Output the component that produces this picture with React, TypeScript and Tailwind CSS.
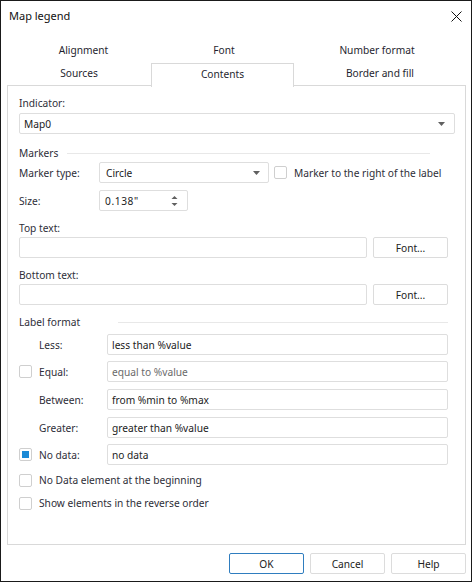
import React from "react";

const Arrow = () => (
  <svg width="7" height="4" viewBox="0 0 7 4" className="shrink-0">
    <path d="M0 0h7L3.5 4z" fill="#606060" />
  </svg>
);

const Check = ({ checked = false }: { checked?: boolean }) => (
  <div className="w-[13px] h-[13px] shrink-0 rounded-[2px] border border-[#cfcfcf] bg-white flex items-center justify-center">
    {checked && <div className="w-[7px] h-[7px] bg-[#1c8ad6]" />}
  </div>
);

const Input = ({ value, placeholder, className = "" }: { value?: string; placeholder?: string; className?: string }) => (
  <div className={"h-[21px] rounded-[2px] border border-[#dedede] bg-white flex items-center px-[4px] " + className}>
    {value ? <span className="text-[#222]">{value}</span> : placeholder ? <span className="text-[#6a6a6a]">{placeholder}</span> : null}
  </div>
);

const Btn = ({ label, primary = false, className = "" }: { label: string; primary?: boolean; className?: string }) => (
  <div
    className={
      "h-[21px] rounded-[2px] border flex items-center justify-center text-[#222] bg-white " +
      (primary ? "border-[#2f7dbf] " : "border-[#dcdcdc] ") +
      className
    }
  >
    {label}
  </div>
);

export default function App() {
  return (
    <div className="w-[476px] h-[582px] bg-white font-['Noto_Sans',sans-serif] text-[10.2px] leading-[16px] text-[#2e2e38] whitespace-nowrap">
      <div className="w-[472px] h-[582px] border border-[#1a1a1a] flex flex-col">
        {/* title bar */}
        <div className="h-[30px] flex items-center pl-[8px] pr-[9px]">
          <span className="text-[#111] text-[11px]">Map legend</span>
          <div className="ml-auto w-[12px] h-[12px] flex items-center justify-center">
            <svg width="11" height="11" viewBox="0 0 11 11">
              <path d="M0.5 0.5L10.5 10.5M10.5 0.5L0.5 10.5" stroke="#111" strokeWidth="1" />
            </svg>
          </div>
        </div>

        <div className="ml-[6px] w-[459px] mt-[6px]">
          {/* tabs row 1 */}
          <div className="flex h-[24px] text-[#1f1f2f] pt-[1px]">
            <div className="w-[153px] flex items-center justify-center">Alignment</div>
            <div className="w-[128px] flex items-center justify-center">Font</div>
            <div className="w-[178px] flex items-center justify-center">Number format</div>
          </div>
          {/* tabs row 2 */}
          <div className="flex h-[24px] text-[#1f1f2f] relative z-10">
            <div className="w-[144px] flex items-center justify-center">Sources</div>
            <div className="w-[143px] mt-[2px] h-[24px] shrink-0 border border-b-0 border-[#d9d9d9] bg-white flex items-center justify-center pb-[3px]">
              Contents
            </div>
            <div className="w-[172px] flex items-center justify-center">Border and fill</div>
          </div>

          {/* panel */}
          <div className="h-[460px] border border-[#d9d9d9] flex flex-col pl-[11px]">
            <div className="mt-[8px] h-[18px] flex items-center">Indicator:</div>
            <div className="mt-[1px] h-[21px] w-[436px] rounded-[2px] border border-[#dedede] flex items-center pl-[4px] pr-[9px]">
              <span className="text-[#222]">Map0</span>
              <span className="ml-auto">
                <Arrow />
              </span>
            </div>

            <div className="mt-[10px] h-[18px] flex items-center">
              <span>Markers</span>
              <div className="ml-[9px] w-[363px] h-px bg-[#e8e8e8]" />
            </div>

            <div className="mt-[0px] h-[21px] flex items-center">
              <span className="w-[80px]">Marker type:</span>
              <div className="w-[170px] h-[21px] rounded-[2px] border border-[#dedede] flex items-center pl-[6px] pr-[8px]">
                <span className="text-[#222]">Circle</span>
                <span className="ml-auto">
                  <Arrow />
                </span>
              </div>
              <div className="ml-[5px]">
                <Check />
              </div>
              <span className="ml-[7px]">Marker to the right of the label</span>
            </div>

            <div className="mt-[7px] h-[21px] flex items-center">
              <span className="w-[80px]">Size:</span>
              <div className="w-[89px] h-[21px] rounded-[2px] border border-[#dedede] flex items-center pl-[5px] pr-[9px]">
                <span className="text-[#222] tracking-[0.6px]">0.138"</span>
                <svg width="7" height="12" viewBox="0 0 7 12" className="ml-auto">
                  <path d="M0.5 4h6L3.5 1z" fill="#606060" />
                  <path d="M0.5 8h6L3.5 11z" fill="#606060" />
                </svg>
              </div>
            </div>

            <div className="mt-[8px] h-[18px] flex items-center">Top text:</div>
            <div className="mt-[0px] flex">
              <Input className="w-[348px]" />
              <Btn label="Font..." className="ml-[6px] w-[75px]" />
            </div>

            <div className="mt-[8px] h-[18px] flex items-center">Bottom text:</div>
            <div className="mt-[0px] flex">
              <Input className="w-[348px]" />
              <Btn label="Font..." className="ml-[6px] w-[75px]" />
            </div>

            <div className="mt-[8px] h-[18px] flex items-center">
              <span>Label format</span>
              <div className="ml-[38px] w-[330px] h-px bg-[#e8e8e8]" />
            </div>

            <div className="mt-[3px] h-[21px] flex items-center">
              <span className="ml-[20px] w-[68px]">Less:</span>
              <Input value="less than %value" className="w-[341px]" />
            </div>
            <div className="mt-[6px] h-[21px] flex items-center">
              <Check />
              <span className="ml-[7px] w-[68px]">Equal:</span>
              <Input placeholder="equal to %value" className="w-[341px]" />
            </div>
            <div className="mt-[7px] h-[21px] flex items-center">
              <span className="ml-[20px] w-[68px]">Between:</span>
              <Input value="from %min to %max" className="w-[341px]" />
            </div>
            <div className="mt-[7px] h-[21px] flex items-center">
              <span className="ml-[20px] w-[68px]">Greater:</span>
              <Input value="greater than %value" className="w-[341px]" />
            </div>
            <div className="mt-[6px] h-[21px] flex items-center">
              <Check checked />
              <span className="ml-[7px] w-[68px]">No data:</span>
              <Input value="no data" className="w-[341px]" />
            </div>

            <div className="mt-[6px] h-[18px] flex items-center">
              <Check />
              <span className="ml-[7px]">No Data element at the beginning</span>
            </div>
            <div className="mt-[5px] h-[18px] flex items-center">
              <Check />
              <span className="ml-[7px]">Show elements in the reverse order</span>
            </div>
          </div>

          {/* footer */}
          <div className="mt-[8px] flex justify-end">
            <Btn label="OK" primary className="w-[75px]" />
            <Btn label="Cancel" className="ml-[6px] w-[75px]" />
            <Btn label="Help" className="ml-[6px] w-[75px]" />
          </div>
        </div>
      </div>
    </div>
  );
}
